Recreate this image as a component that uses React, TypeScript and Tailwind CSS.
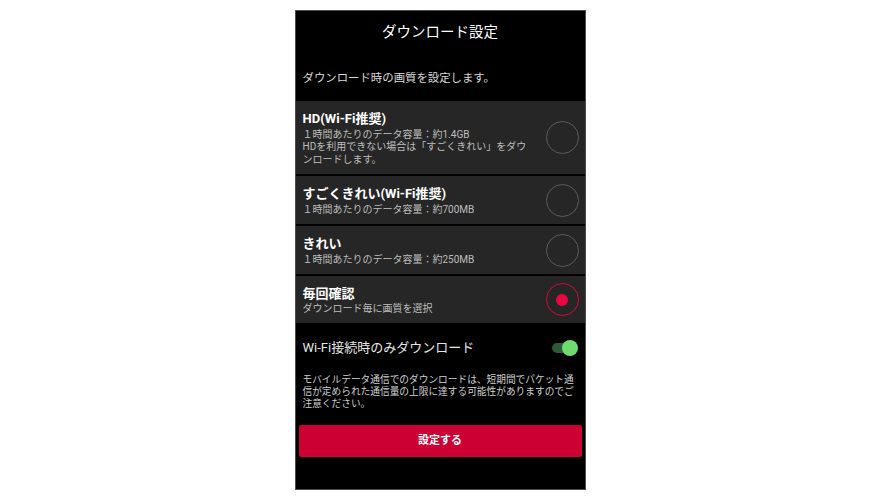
const options = [
  {
    title: "HD(Wi-Fi推奨)",
    lines: [
      "１時間あたりのデータ容量：約1.4GB",
      "HDを利用できない場合は「すごくきれい」をダウ",
      "ンロードします。",
    ],
    h: "h-[73px]",
  },
  { title: "すごくきれい(Wi-Fi推奨)", lines: ["１時間あたりのデータ容量：約700MB"], h: "h-[48px]" },
  { title: "きれい", lines: ["１時間あたりのデータ容量：約250MB"], h: "h-[48px]" },
  { title: "毎回確認", lines: ["ダウンロード毎に画質を選択"], h: "h-[47px]" },
];

function Radio({ checked }: { checked: boolean }) {
  if (checked) {
    return (
      <div className="w-[33px] h-[33px] rounded-full border-[1.5px] border-[#d40a3c] flex items-center justify-center shrink-0">
        <div className="w-[12px] h-[12px] rounded-full bg-[#e8083e]" />
      </div>
    );
  }
  return (
    <div className="w-[33px] h-[33px] rounded-full border-[1.5px] border-[#5c5c5c] shrink-0" />
  );
}

export default function App() {
  const selected = 3;

  return (
    <div
      className="w-[880px] h-[500px] bg-white pt-[10px]"
      style={{ fontFamily: 'Roboto, "Noto Sans CJK JP", sans-serif' }}
    >
      <div className="mx-auto w-[291px] h-[480px] border border-[#4d4d4d] bg-black flex flex-col">
        <div className="h-[43px] shrink-0 flex items-center justify-center text-white text-[14.5px]">
          ダウンロード設定
        </div>
        <div className="h-[47px] shrink-0 flex items-center pl-[7px] pt-[3px] text-[11.4px] text-[#d8d8d8]">
          ダウンロード時の画質を設定します。
        </div>

        <div className="flex flex-col gap-[2px]">
          {options.map((o, i) => (
            <div
              key={o.title}
              className={`${o.h} bg-[#262626] flex items-center justify-between pl-[7px] pr-[6px]`}
            >
              <div className="flex flex-col">
                <div className="h-[18px] flex items-center text-white font-bold text-[13px] whitespace-nowrap">
                  {o.title}
                </div>
                {o.lines.map((l) => (
                  <div
                    key={l}
                    className="h-[12.5px] flex items-center text-[#bdbdbd] text-[10px] whitespace-nowrap"
                  >
                    {l}
                  </div>
                ))}
              </div>
              <Radio checked={i === selected} />
            </div>
          ))}
        </div>

        <div className="h-[49px] shrink-0 flex items-center justify-between pl-[7px] pr-[7px]">
          <span className="text-[#e6e6e6] text-[13px]">Wi-Fi接続時のみダウンロード</span>
          <div className="relative w-[26px] h-[16px] flex items-center">
            <div className="w-[24px] h-[10px] rounded-full bg-[#2d5a32]" />
            <div className="absolute right-0 top-0 w-[16px] h-[16px] rounded-full bg-[#6fdb6f]" />
          </div>
        </div>

        <div
          className="mt-[1px] pl-[7px] pr-[6px] text-[9.7px] leading-[12px] text-[#cfcfcf]"
          style={{ fontFamily: '"Noto Sans CJK JP", sans-serif' }}
        >
          モバイルデータ通信でのダウンロードは、短期間でパケット通信が定められた通信量の上限に達する可能性がありますのでご注意ください。
        </div>

        <div className="px-[3px] mt-[16px]">
          <button className="w-full h-[32px] rounded-[2px] bg-[#cc0033] text-white text-[11px] font-bold">
            設定する
          </button>
        </div>
      </div>
    </div>
  );
}
